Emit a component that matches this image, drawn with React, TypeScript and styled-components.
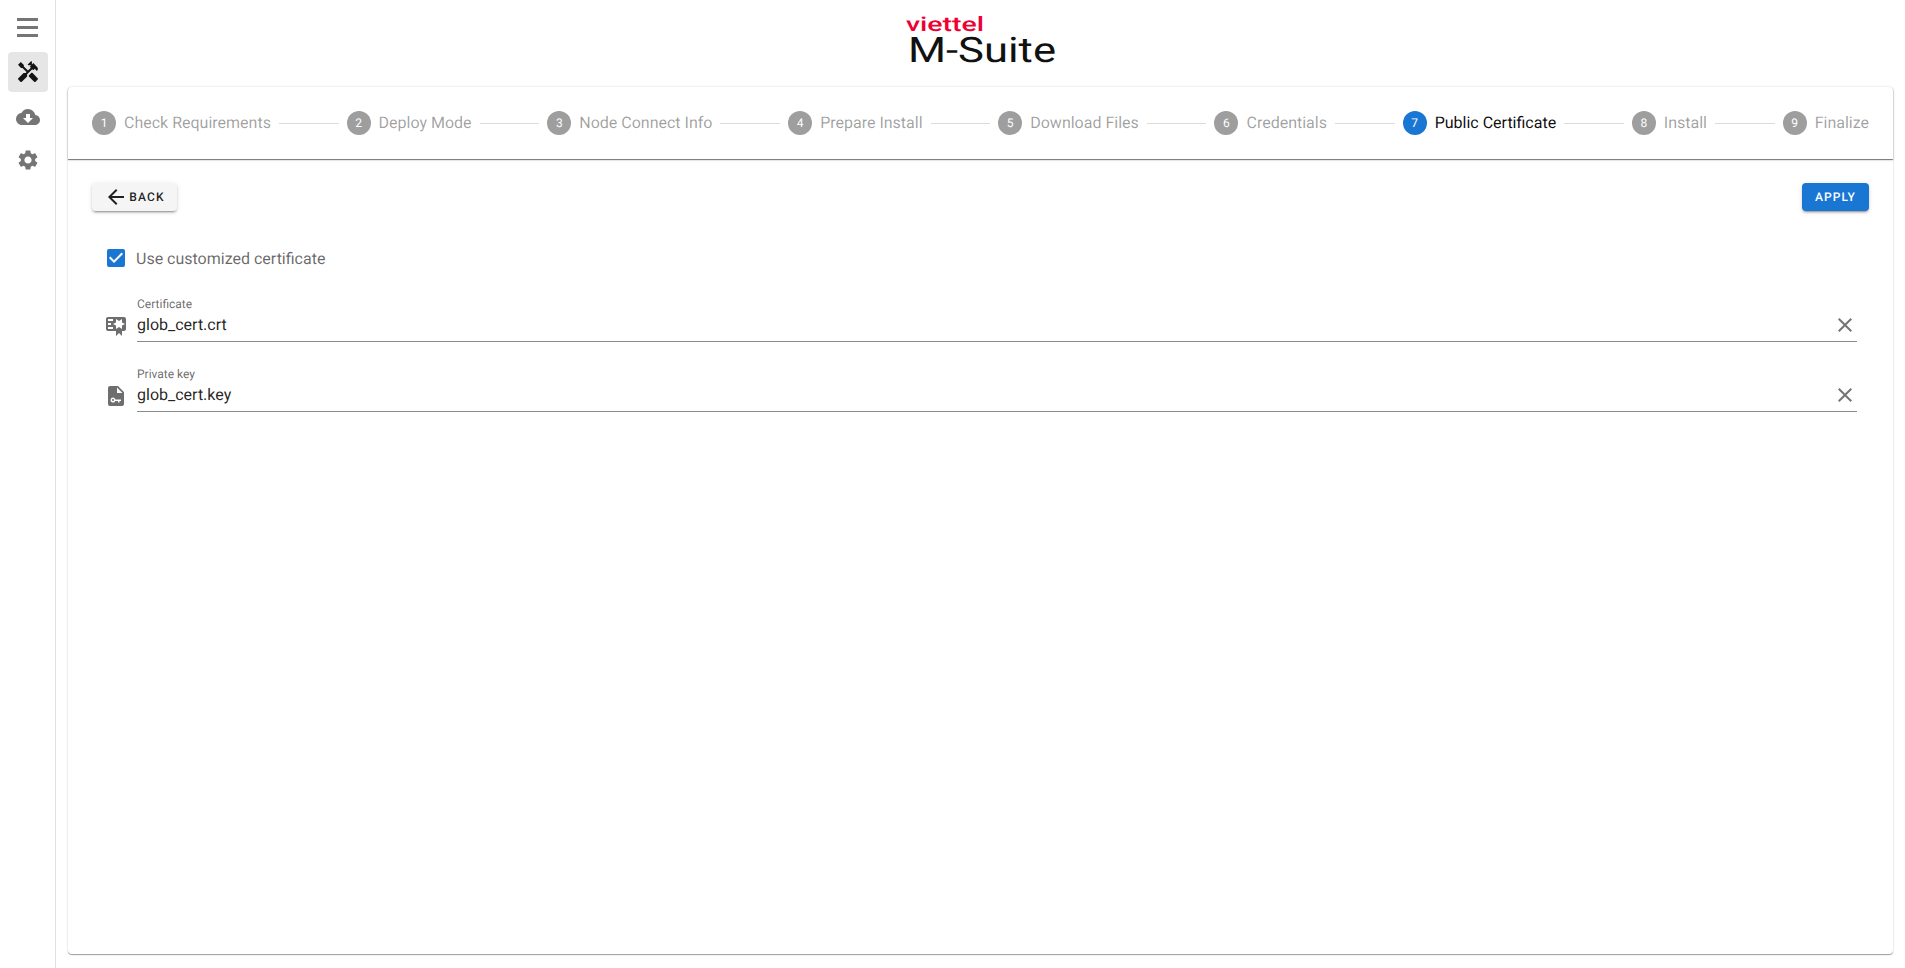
import { Fragment } from "react";
import styled, { createGlobalStyle } from "styled-components";
import { MdArrowBack, MdCheckBox, MdClose, MdCloudDownload, MdHandyman, MdSettings } from "react-icons/md";

const GlobalStyle = createGlobalStyle`
    * {
        box-sizing: border-box;
    }
    body {
        margin: 0;
        height: 100vh;
        overflow: hidden;
        background: #fff;
        font-family: Roboto, "Liberation Sans", sans-serif;
        text-rendering: geometricPrecision;
    }
`;

const Page = styled.div`
    display: flex;
    height: 100vh;
`;

const Sidebar = styled.nav`
    display: flex;
    flex-direction: column;
    align-items: center;
    flex: 0 0 56px;
    padding-top: 7px;
    border-right: 1px solid #e0e0e0;
`;

const NavItem = styled.div<{ $active?: boolean; $gap?: number }>`
    display: flex;
    align-items: center;
    justify-content: center;
    width: 40px;
    height: 40px;
    margin-bottom: ${(p) => p.$gap ?? 5}px;
    border-radius: 4px;
    color: ${(p) => (p.$active ? "#141414" : "#757575")};
    background: ${(p) => (p.$active ? "#e6e6e6" : "transparent")};
`;

const Main = styled.main`
    display: flex;
    flex-direction: column;
    flex: 1;
    min-width: 0;
    padding: 0 12px 14px;
`;

const LogoBar = styled.header`
    display: flex;
    justify-content: center;
    flex: 0 0 87px;
    padding-top: 8px;
`;

const Card = styled.section`
    display: flex;
    flex-direction: column;
    flex: 1;
    border-radius: 4px;
    background: #fff;
    box-shadow: 0 1px 1px 0 rgba(0, 0, 0, 0.36), 0 0 3px 0 rgba(0, 0, 0, 0.09);
`;

const Stepper = styled.div`
    display: flex;
    align-items: center;
    height: 72px;
    padding: 0 24px;
    border-radius: 4px 4px 0 0;
    box-shadow: 0 1px 1px 0 rgba(0, 0, 0, 0.5), 0 1px 3px 0 rgba(0, 0, 0, 0.12);
`;

const Step = styled.div`
    display: flex;
    align-items: center;
    gap: 8px;
`;

const StepNumber = styled.span<{ $active?: boolean }>`
    display: flex;
    align-items: center;
    justify-content: center;
    width: 24px;
    height: 24px;
    border-radius: 50%;
    font-size: 12px;
    color: #fff;
    background: ${(p) => (p.$active ? "#1976d2" : "#9e9e9e")};
`;

const StepLabel = styled.span<{ $active?: boolean }>`
    font-size: 16px;
    line-height: 24px;
    white-space: nowrap;
    color: ${(p) => (p.$active ? "rgba(0, 0, 0, 0.95)" : "rgba(0, 0, 0, 0.38)")};
`;

const Connector = styled.span`
    flex: 1;
    height: 1px;
    margin: 0 8px;
    background: #dcdcdc;
`;

const Body = styled.div`
    display: flex;
    flex-direction: column;
    padding: 24px;
`;

const Actions = styled.div`
    display: flex;
    justify-content: space-between;
    margin-bottom: 35px;
`;

const Button = styled.button<{ $primary?: boolean }>`
    display: flex;
    align-items: center;
    justify-content: center;
    gap: 1px;
    height: 28px;
    width: ${(p) => (p.$primary ? 67 : 85)}px;
    padding: 0;
    border: 0;
    border-radius: 4px;
    font-family: inherit;
    font-size: 12px;
    font-weight: 500;
    letter-spacing: 1.1px;
    text-rendering: inherit;
    color: ${(p) => (p.$primary ? "#fff" : "rgba(0, 0, 0, 0.87)")};
    background: ${(p) => (p.$primary ? "#1976d2" : "#f5f5f5")};
    box-shadow: 0 3px 1px -2px rgba(0, 0, 0, 0.2), 0 2px 2px 0 rgba(0, 0, 0, 0.14), 0 1px 5px 0 rgba(0, 0, 0, 0.12);
`;

const Form = styled.div`
    display: flex;
    flex-direction: column;
    gap: 24px;
    padding: 0 12px;
`;

const CheckRow = styled.label`
    display: flex;
    align-items: center;
    gap: 8px;
    height: 24px;
    margin-bottom: 2px;
    font-size: 16px;
    color: rgba(0, 0, 0, 0.6);
    svg {
        color: #1976d2;
    }
`;

const FieldRow = styled.div`
    display: flex;
    align-items: flex-end;
    gap: 9px;
    color: #6e6e6e;
`;

const FieldIcon = styled.svg`
    flex: 0 0 24px;
    width: 24px;
    height: 24px;
    margin-bottom: 4px;
    fill: currentColor;
`;

const Field = styled.div`
    flex: 1;
    display: flex;
    flex-direction: column;
    border-bottom: 1px solid #8c8c8c;
`;

const FieldLabel = styled.span`
    font-size: 12px;
    line-height: 16px;
    color: rgba(0, 0, 0, 0.6);
`;

const FieldValue = styled.div`
    display: flex;
    align-items: center;
    justify-content: space-between;
    height: 29px;
    padding-bottom: 4px;
    font-size: 16px;
    line-height: 24px;
    color: rgba(0, 0, 0, 0.87);
    svg {
        color: #757575;
        flex: none;
    }
`;

const steps = [
    "Check Requirements",
    "Deploy Mode",
    "Node Connect Info",
    "Prepare Install",
    "Download Files",
    "Credentials",
    "Public Certificate",
    "Install",
    "Finalize",
];

const Logo = () => (
    <svg width="160" height="66" viewBox="0 0 160 66">
        <text x="5" y="23" fontFamily="Roboto, sans-serif" fontSize="20" fontWeight="500" fill="#ee0033" textLength="78" lengthAdjust="spacingAndGlyphs">viettel</text>
        <text x="7" y="54" fontFamily="Roboto, sans-serif" fontSize="35" fontWeight="400" fill="#111" textLength="148" lengthAdjust="spacingAndGlyphs">M-Suite</text>
    </svg>
);

const MenuIcon = () => (
    <svg width="21" height="19" viewBox="0 0 21 19" fill="currentColor">
        <rect y="0" width="21" height="3" />
        <rect y="8" width="21" height="3" />
        <rect y="16" width="21" height="3" />
    </svg>
);

const CertificateIcon = () => (
    <FieldIcon viewBox="0 0 24 24">
        <path d="M4,3C2.89,3 2,3.89 2,5V15A2,2 0 0,0 4,17H12V22L15,19L18,22V17H20A2,2 0 0,0 22,15V8L22,5C22,3.89 21.1,3 20,3H4M12,5L15,7L18,5V8.5L21,10L18,11.5V15L15,13L12,15V11.5L9,10L12,8.5V5M4,5H9V7H4V5M4,9H7V11H4V9M4,13H9V15H4V13Z" />
    </FieldIcon>
);

const FileKeyIcon = () => (
    <FieldIcon viewBox="0 0 24 24">
        <path fillRule="evenodd" d="M6,2H14L20,8V20A2,2 0 0,1 18,22H6A2,2 0 0,1 4,20V4A2,2 0 0,1 6,2M13,3.5V9H18.5L13,3.5M9,13.5A2.5,2.5 0 1,0 11.3,17H14V18.5H15.5V17H17V15.5H11.3A2.5,2.5 0 0,0 9,13.5M9,15A1,1 0 1,1 9,17A1,1 0 0,1 9,15Z" />
    </FieldIcon>
);

const App = () => {
    return (
        <Page>
            <GlobalStyle />
            <Sidebar>
                <NavItem><MenuIcon /></NavItem>
                <NavItem $active><MdHandyman size={24} /></NavItem>
                <NavItem $gap={3}><MdCloudDownload size={24} /></NavItem>
                <NavItem><MdSettings size={24} /></NavItem>
            </Sidebar>
            <Main>
                <LogoBar><Logo /></LogoBar>
                <Card>
                    <Stepper>
                        {steps.map((label, i) => (
                            <Fragment key={label}>
                                {i > 0 && <Connector />}
                                <Step>
                                    <StepNumber $active={i === 6}>{i + 1}</StepNumber>
                                    <StepLabel $active={i === 6}>{label}</StepLabel>
                                </Step>
                            </Fragment>
                        ))}
                    </Stepper>
                    <Body>
                        <Actions>
                            <Button><MdArrowBack size={24} />BACK</Button>
                            <Button $primary>APPLY</Button>
                        </Actions>
                        <Form>
                            <CheckRow><MdCheckBox size={24} />Use customized certificate</CheckRow>
                            <FieldRow>
                                <CertificateIcon />
                                <Field>
                                    <FieldLabel>Certificate</FieldLabel>
                                    <FieldValue>glob_cert.crt<MdClose size={24} /></FieldValue>
                                </Field>
                            </FieldRow>
                            <FieldRow>
                                <FileKeyIcon />
                                <Field>
                                    <FieldLabel>Private key</FieldLabel>
                                    <FieldValue>glob_cert.key<MdClose size={24} /></FieldValue>
                                </Field>
                            </FieldRow>
                        </Form>
                    </Body>
                </Card>
            </Main>
        </Page>
    );
};

export default App;
